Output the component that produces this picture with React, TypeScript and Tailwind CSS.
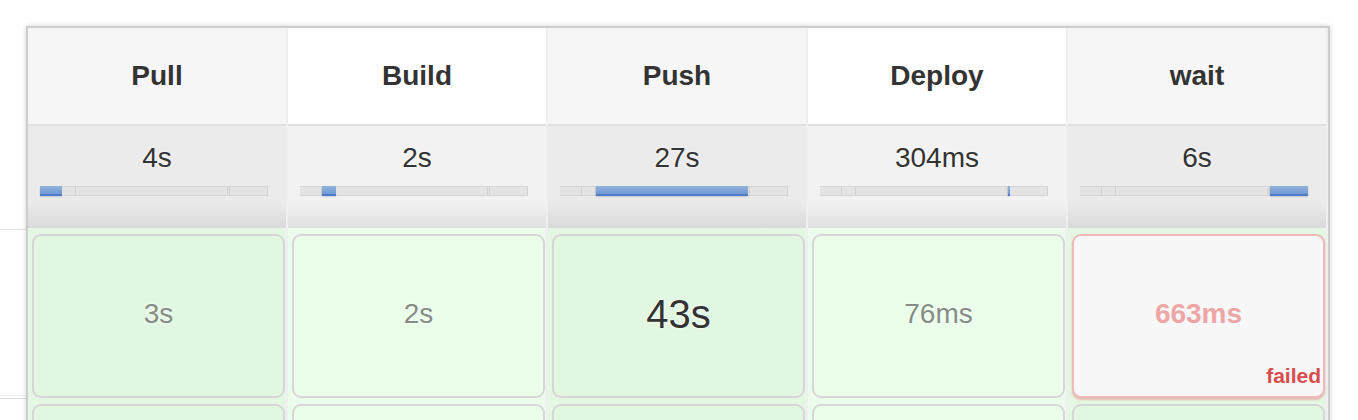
import React from "react";

type Seg = { w: number; active: boolean };

const widths = [22, 14, 152, 2, 38];

const stages = [
  { name: "Pull", dur: "4s", cell: "3s", kind: "ok" },
  { name: "Build", dur: "2s", cell: "2s", kind: "ok" },
  { name: "Push", dur: "27s", cell: "43s", kind: "big" },
  { name: "Deploy", dur: "304ms", cell: "76ms", kind: "ok" },
  { name: "wait", dur: "6s", cell: "663ms", kind: "failed" },
];

function Bar({ active }: { active: number }) {
  const segs: Seg[] = widths.map((w, i) => ({ w, active: i === active }));
  return (
    <div className="flex h-[10px] w-[228px] ml-[12px] mt-[12px] shrink-0">
      {segs.map((s, i) =>
        s.active ? (
          <div
            key={i}
            className="h-full bg-gradient-to-b from-[#93b3dc] to-[#7199d4] border-b-[2px] border-[#4d7bcb] shadow-[0_1px_2px_rgba(0,0,0,0.15)]"
            style={{ width: s.w }}
          />
        ) : (
          <div
            key={i}
            className="h-full bg-[#e3e3e3] border-y border-[#d6d6d6] border-r border-r-[#d2d2d2]"
            style={{ width: s.w }}
          />
        )
      )}
    </div>
  );
}

export default function App() {
  return (
    <div className="w-[1358px] h-[420px] overflow-hidden bg-white flex items-start font-['Liberation_Sans',Arial,sans-serif]">
      <div className="w-[26px] shrink-0 pt-[229px]">
        <div className="border-t border-[#e2e2e2] h-[166px]" />
        <div className="border-t border-[#eeeeee] h-[3px]" />
        <div className="border-t border-[#dcdcdc]" />
      </div>
      <div className="mt-[26px] shrink-0 border-t-2 border-x-2 border-[#cdcdcd] shadow-[0_0_5px_rgba(0,0,0,0.18)] flex">
        {stages.map((s, i) => {
          const odd = i % 2 === 0;
          return (
            <div key={i} className="flex w-[260px] shrink-0">
              <div className="flex flex-col w-[258px] shrink-0">
                <div
                  className={`h-[96px] shrink-0 flex items-center justify-center text-[28px] font-bold text-[#333333] ${
                    odd ? "bg-[#f6f6f6]" : "bg-white"
                  }`}
                >
                  {s.name}
                </div>
                <div
                  className={`h-[104px] shrink-0 border-t-2 border-[#e0e0e0] ${
                    odd
                      ? "bg-[linear-gradient(to_bottom,#ebebeb_0%,#ebebeb_74%,#dadada_100%)]"
                      : "bg-[linear-gradient(to_bottom,#f2f2f2_0%,#f2f2f2_74%,#e0e0e0_100%)]"
                  }`}
                >
                  <div className="pt-[16px] h-[48px] leading-[32px] text-center text-[28px] text-[#333333] [text-shadow:0_0_3px_#ffffff]">
                    {s.dur}
                  </div>
                  <Bar active={i} />
                </div>
                <div className={`shrink-0 pt-[3px] ${odd ? "bg-[#e4f6e4]" : "bg-[#ecfcec]"}`}>
                  {[0, 1].map((r) => {
                    const failed = s.kind === "failed" && r === 0;
                    const cardBg = failed
                      ? "bg-[#f7f7f7] border-[#f0b8b8] shadow-[0_2px_2px_rgba(220,80,80,0.35)]"
                      : odd
                      ? "bg-[#e2f7e2] border-[#d6d6d6]"
                      : "bg-[#eafeea] border-[#d6d6d6]";
                    return (
                      <div key={r} className="py-[3px]">
                        <div
                          className={`relative ml-[4px] w-[253px] h-[164px] rounded-[9px] border-2 flex items-center justify-center ${cardBg}`}
                        >
                          {r === 0 && (
                            <span
                              className={
                                failed
                                  ? "text-[28px] font-bold text-[#eda5a5] mt-[-4px]"
                                  : s.kind === "big"
                                  ? "text-[40px] text-[#333333] mt-[-4px] [text-shadow:0_0_3px_#ffffff]"
                                  : "text-[28px] text-[#848e84] mt-[-4px] [text-shadow:0_0_3px_#ffffff]"
                              }
                            >
                              {s.cell}
                            </span>
                          )}
                          {failed && (
                            <span className="absolute right-[2px] bottom-[10px] text-[21px] font-bold text-[#d84c4c] leading-none">
                              failed
                            </span>
                          )}
                        </div>
                      </div>
                    );
                  })}
                </div>
              </div>
              <div className="w-[2px] shrink-0 bg-[#efefef]" />
            </div>
          );
        })}
      </div>
    </div>
  );
}
